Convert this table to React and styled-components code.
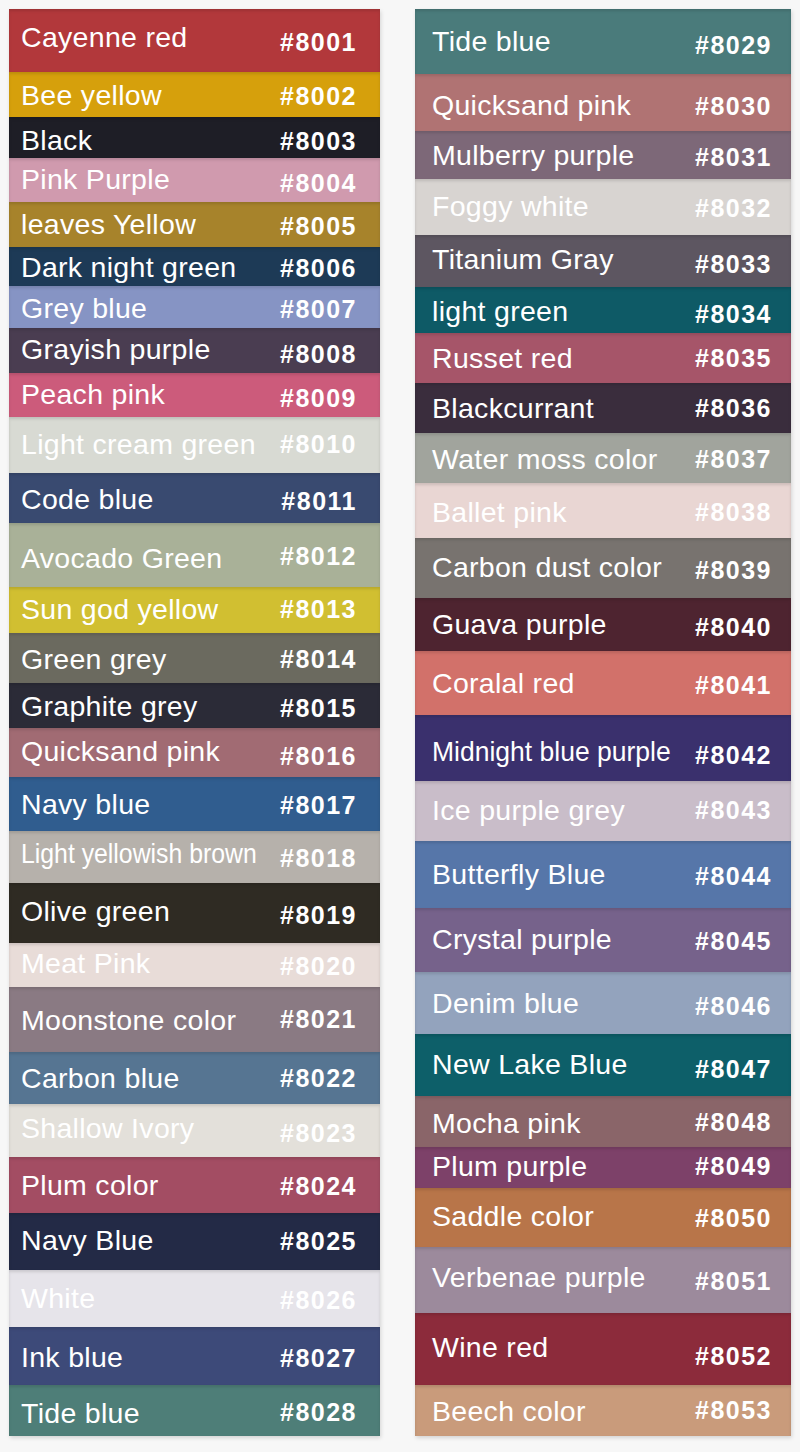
import styled, { createGlobalStyle } from 'styled-components';

// [name, code, row height, colour, name top, code top, horizontal squeeze]
const left = [
  ['Cayenne red', '8001', 63, '#b2383b', 14, 21],
  ['Bee yellow', '8002', 45, '#d6a00c', 9, 12],
  ['Black', '8003', 41, '#1e1e26', 9, 12],
  ['Pink Purple', '8004', 44, '#d09aae', 7, 13],
  ['leaves Yellow', '8005', 45, '#a7832b', 8, 12],
  ['Dark night green', '8006', 39, '#1d3a56', 6, 9],
  ['Grey blue', '8007', 42, '#8694c4', 8, 11],
  ['Grayish purple', '8008', 45, '#4a3d51', 7, 14],
  ['Peach pink', '8009', 44, '#cc5b7b', 7, 13],
  ['Light cream green', '8010', 56, '#d8dad3', 13, 15],
  ['Code blue', '8011', 50, '#394a70', 12, 16],
  ['Avocado Green', '8012', 64, '#a9b198', 21, 21],
  ['Sun god yellow', '8013', 46, '#d1bf31', 8, 10],
  ['Green grey', '8014', 50, '#6b6a5f', 12, 14],
  ['Graphite grey', '8015', 45, '#2b2b37', 9, 13],
  ['Quicksand pink', '8016', 49, '#a16b73', 9, 16],
  ['Navy blue', '8017', 54, '#305d8f', 13, 16],
  ['Light yellowish brown', '8018', 52, '#b6b1ab', 8, 15, 0.87],
  ['Olive green', '8019', 60, '#2f2b23', 14, 20],
  ['Meat Pink', '8020', 44, '#e8dcd8', 6, 11],
  ['Moonstone color', '8021', 65, '#8a7a83', 19, 20],
  ['Carbon blue', '8022', 52, '#567592', 12, 14],
  ['Shallow Ivory', '8023', 53, '#e3e0da', 10, 17],
  ['Plum color', '8024', 56, '#a34d63', 14, 17],
  ['Navy Blue', '8025', 57, '#232a46', 13, 16],
  ['White', '8026', 57, '#e6e4ea', 14, 18],
  ['Ink blue', '8027', 58, '#3d4a79', 16, 19],
  ['Tide blue', '8028', 51, '#4e7e78', 14, 15],
];

const right = [
  ['Tide blue', '8029', 65, '#4a7b7b', 18, 24],
  ['Quicksand pink', '8030', 57, '#b07373', 17, 20],
  ['Mulberry purple', '8031', 48, '#7d6878', 10, 14],
  ['Foggy white', '8032', 56, '#d8d4d1', 13, 17],
  ['Titanium Gray', '8033', 52, '#5d5661', 10, 17],
  ['light green', '8034', 46, '#0e5a66', 10, 15],
  ['Russet red', '8035', 50, '#a65569', 11, 13],
  ['Blackcurrant', '8036', 50, '#3a2d3d', 11, 13],
  ['Water moss color', '8037', 50, '#a1a49d', 12, 14],
  ['Ballet pink', '8038', 55, '#e9d6d3', 15, 17],
  ['Carbon dust color', '8039', 60, '#78736f', 15, 20],
  ['Guava purple', '8040', 53, '#4e2430', 12, 17],
  ['Coralal red', '8041', 64, '#d2716a', 18, 22],
  ['Midnight blue purple', '8042', 66, '#3a306d', 22, 28, 0.93],
  ['Ice purple grey', '8043', 60, '#c9bdc9', 15, 17],
  ['Butterfly Blue', '8044', 67, '#5676a9', 19, 23],
  ['Crystal purple', '8045', 64, '#76628b', 17, 21],
  ['Denim blue', '8046', 62, '#93a3bd', 17, 22],
  ['New Lake Blue', '8047', 62, '#0d5f69', 16, 23],
  ['Mocha pink', '8048', 51, '#8a6569', 13, 14],
  ['Plum purple', '8049', 41, '#7d4169', 5, 7],
  ['Saddle color', '8050', 59, '#b87549', 14, 18],
  ['Verbenae purple', '8051', 66, '#9c8a9c', 16, 22],
  ['Wine red', '8052', 72, '#8c2b3b', 20, 31],
  ['Beech color', '8053', 51, '#c99b7b', 12, 13],
];

const GlobalStyle = createGlobalStyle`
  body {
    margin: 0;
    background: #f7f7f7;
    font-family: "Liberation Sans", Arial, sans-serif;
  }
`;

const Page = styled.div`
  display: flex;
  align-items: flex-start;
  gap: 35px;
  padding: 9px 0 0 9px;
  width: 800px;
  height: 1452px;
  box-sizing: border-box;
`;

const Column = styled.div`
  display: flex;
  flex-direction: column;
  width: ${({ $w }) => $w}px;
  box-shadow: 1px 2px 4px rgba(0, 0, 0, 0.14);
`;

const Row = styled.div`
  display: flex;
  justify-content: space-between;
  align-items: flex-start;
  height: ${({ $h }) => $h}px;
  background: ${({ $bg }) => $bg};
  padding: 0 ${({ $pr }) => $pr}px 0 ${({ $pl }) => $pl}px;
  box-sizing: border-box;
  box-shadow: inset 0 2px 3px rgba(0, 0, 0, 0.12);
  color: #fff;
  line-height: 1;
  white-space: nowrap;
`;

const Name = styled.span`
  display: inline-block;
  flex: 0 1 auto;
  min-width: 0;
  margin-top: ${({ $t }) => $t}px;
  font-size: 28.5px;
  letter-spacing: ${({ $sx }) => ($sx ? 0 : 0.3)}px;
  transform: scaleX(${({ $sx }) => $sx ?? 1});
  transform-origin: left top;
`;

const Code = styled.span`
  flex: none;
  margin-left: auto;
  margin-top: ${({ $t }) => $t}px;
  font-size: 25px;
  font-weight: 700;
  letter-spacing: 1.5px;
`;

const Swatches = ({ rows, width, pl, pr }) => (
  <Column $w={width}>
    {rows.map(([name, code, h, bg, nt, ct, sx]) => (
      <Row key={code} $h={h} $bg={bg} $pl={pl} $pr={pr}>
        <Name $t={nt} $sx={sx}>{name}</Name>
        <Code $t={ct}>#{code}</Code>
      </Row>
    ))}
  </Column>
);

export default function App() {
  return (
    <>
      <GlobalStyle />
      <Page>
        <Swatches rows={left} width={371} pl={12} pr={23} />
        <Swatches rows={right} width={376} pl={17} pr={19} />
      </Page>
    </>
  );
}
